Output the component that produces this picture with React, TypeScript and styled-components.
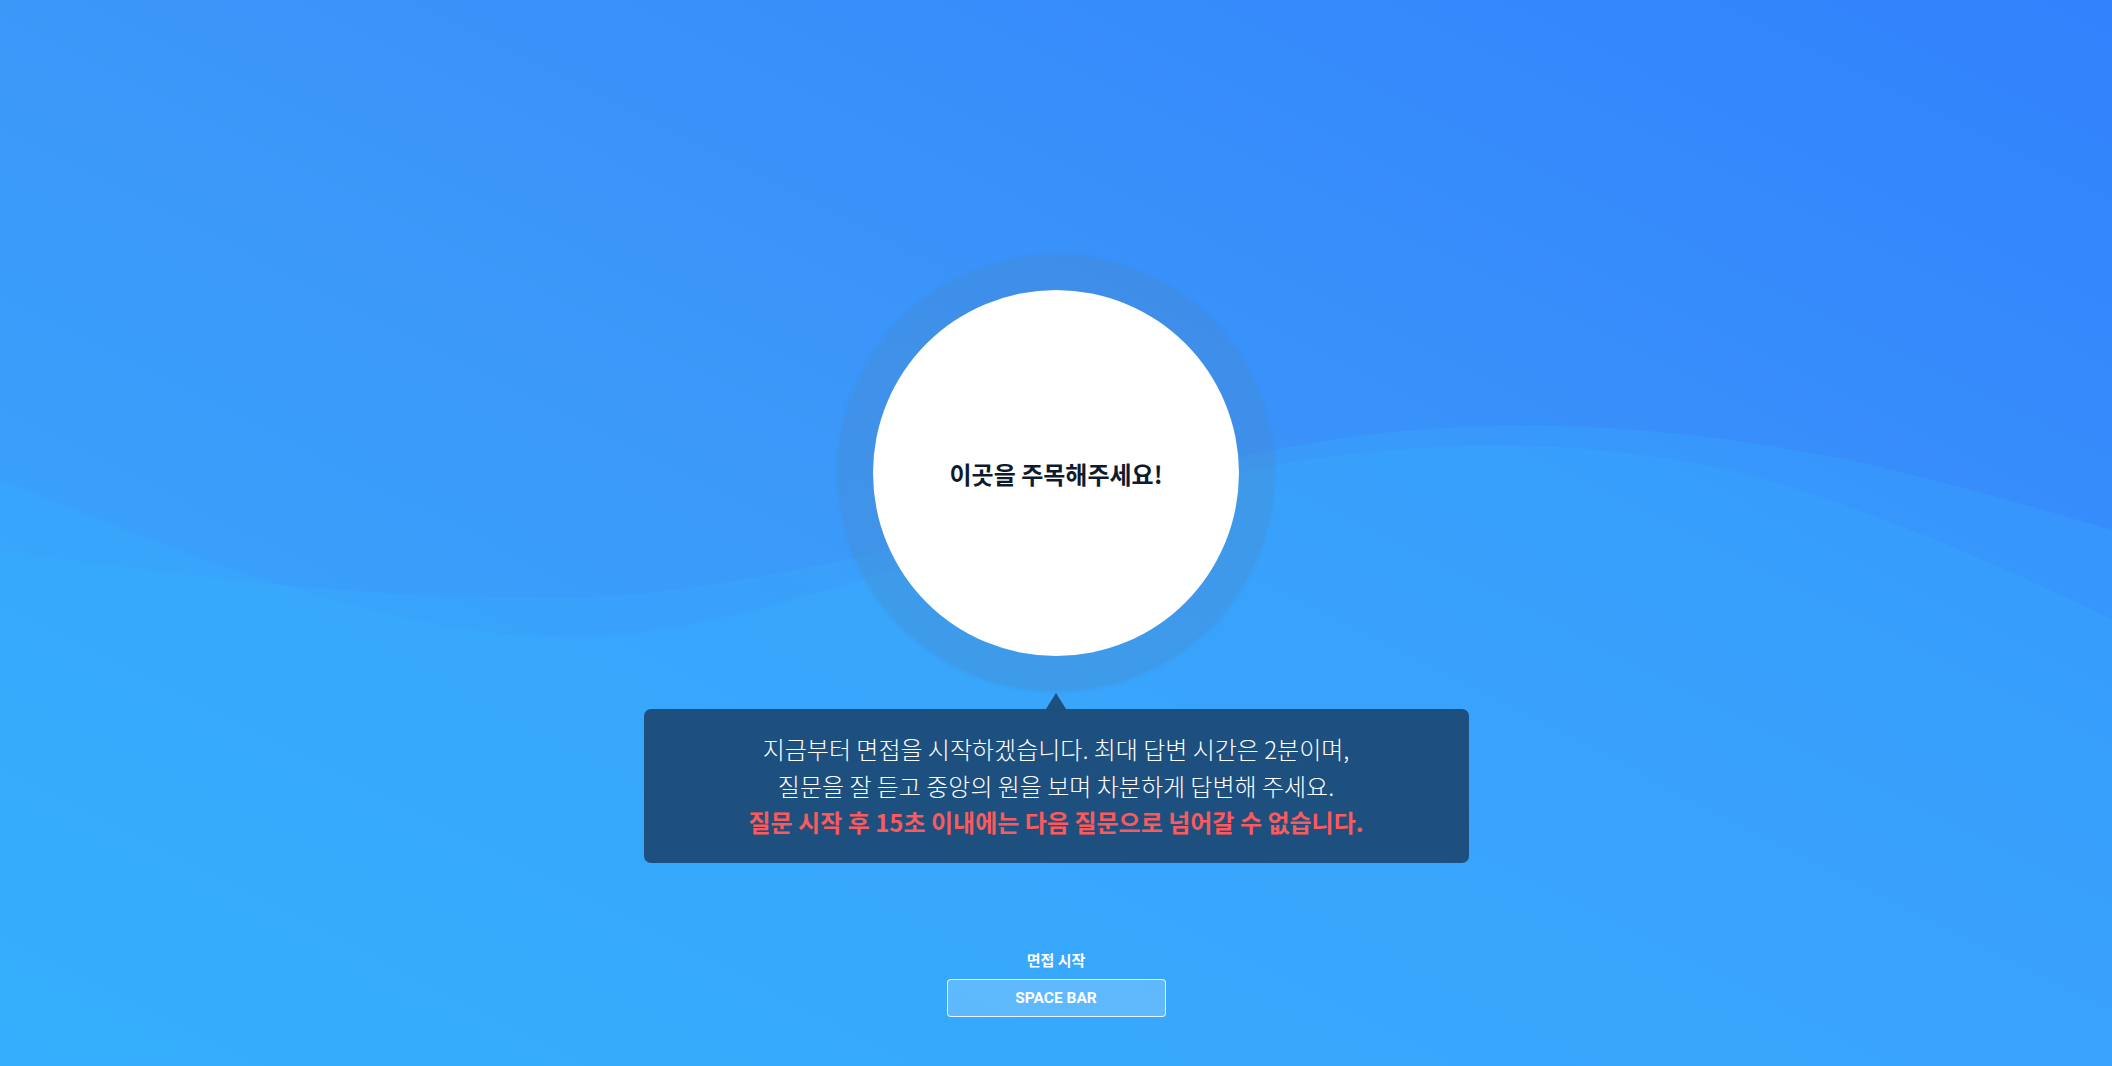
import React from "react";
import styled, { createGlobalStyle } from "styled-components";

const GlobalStyle = createGlobalStyle`
  html, body {
    margin: 0;
    padding: 0;
  }
  body {
    font-family: "Noto Sans CJK KR", "Noto Sans", sans-serif;
  }
  * { box-sizing: border-box; }
`;

const Page = styled.main`
  position: relative;
  width: 100%;
  height: 1066px;
  overflow: hidden;
  background: linear-gradient(to bottom left, #3282fd 0%, #3c97f9 50%, #35abfd 100%);
`;

const WaveLayer = styled.svg`
  position: absolute;
  inset: 0;
  width: 100%;
  height: 100%;
  z-index: 0;
`;

const Stage = styled.div`
  position: relative;
  z-index: 1;
  display: flex;
  flex-direction: column;
  align-items: center;
  padding-top: 290px;
`;

const FocusCircle = styled.div`
  width: 366px;
  height: 366px;
  border-radius: 50%;
  background: #ffffff;
  display: flex;
  align-items: center;
  justify-content: center;
  box-shadow: 0 0 3px 36px rgba(74, 136, 200, 0.33);
`;

const FocusText = styled.span`
  font-family: "Noto Sans CJK KR", sans-serif;
  font-weight: 700;
  font-size: 24px;
  color: #0f1b2d;
`;

const Bubble = styled.div`
  position: relative;
  margin-top: 53px;
  width: 825px;
  padding: 22px 0;
  border-radius: 7px;
  background: #1d4f7f;
  text-align: center;

  &::before {
    content: "";
    position: absolute;
    left: 50%;
    top: -16px;
    transform: translateX(-50%);
    border-left: 10px solid transparent;
    border-right: 10px solid transparent;
    border-bottom: 16px solid #1d4f7f;
  }
`;

const BubbleLine = styled.p<{ $warn?: boolean }>`
  margin: 0;
  font-family: "Noto Sans CJK KR", sans-serif;
  font-size: 24px;
  line-height: 36.5px;
  font-weight: ${(p) => (p.$warn ? 700 : 300)};
  color: ${(p) => (p.$warn ? "#fa5a5c" : "#ffffff")};
`;

const StartLabel = styled.div`
  margin-top: 87px;
  font-family: "Noto Sans CJK KR", sans-serif;
  font-size: 15px;
  line-height: 20px;
  font-weight: 700;
  color: #ffffff;
`;

const SpaceButton = styled.button`
  margin-top: 9px;
  width: 219px;
  height: 38px;
  border: 1px solid rgba(255, 255, 255, 0.85);
  border-radius: 4px;
  background: rgba(255, 255, 255, 0.2);
  color: #ffffff;
  font-family: Roboto, "Liberation Sans", sans-serif;
  font-weight: 700;
  font-size: 15.5px;
  cursor: pointer;
`;

export default function App() {
  return (
    <>
      <GlobalStyle />
      <Page>
        <WaveLayer viewBox="0 0 2112 1066" preserveAspectRatio="none" aria-hidden="true">
          <path
            d="M0,480 C200,560 400,640 580,637 C760,634 1000,520 1250,470 C1450,430 1650,440 1800,490 C1950,540 2050,590 2112,620 L2112,1066 L0,1066 Z"
            fill="#36b4ff"
            opacity="0.22"
          />
          <path
            d="M0,550 C200,580 400,600 560,598 C760,596 1000,520 1250,455 C1450,410 1650,420 1850,460 C1980,490 2060,515 2112,530 L2112,1066 L0,1066 Z"
            fill="#36b4ff"
            opacity="0.22"
          />
        </WaveLayer>
        <Stage>
          <FocusCircle>
            <FocusText>이곳을 주목해주세요!</FocusText>
          </FocusCircle>
          <Bubble>
            <BubbleLine>지금부터 면접을 시작하겠습니다. 최대 답변 시간은 2분이며,</BubbleLine>
            <BubbleLine>질문을 잘 듣고 중앙의 원을 보며 차분하게 답변해 주세요.</BubbleLine>
            <BubbleLine $warn>질문 시작 후 15초 이내에는 다음 질문으로 넘어갈 수 없습니다.</BubbleLine>
          </Bubble>
          <StartLabel>면접 시작</StartLabel>
          <SpaceButton>SPACE BAR</SpaceButton>
        </Stage>
      </Page>
    </>
  );
}
